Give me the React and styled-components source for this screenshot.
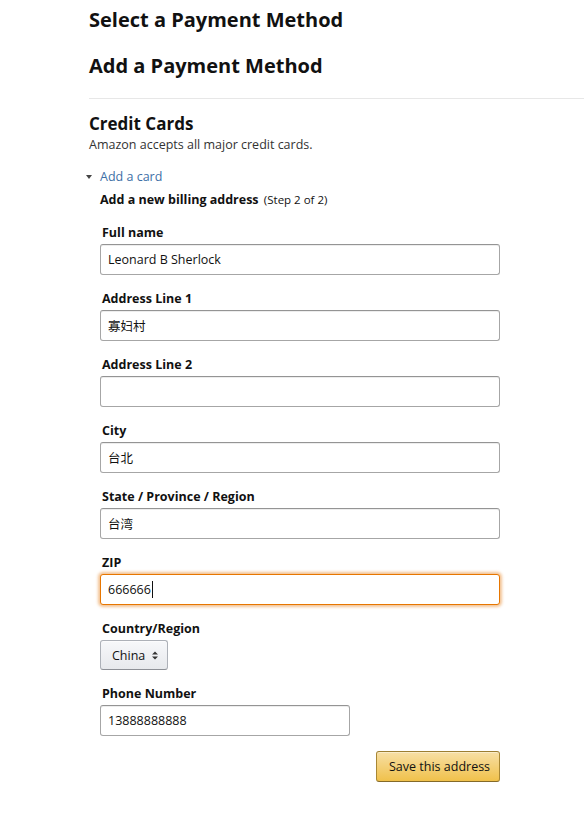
import React from "react";
import styled, { createGlobalStyle } from "styled-components";

const Global = createGlobalStyle`
  html, body { margin: 0; padding: 0; background: #fff; }
  body { font-family: "Open Sans", "Noto Sans CJK SC", sans-serif; color: #111; }
  * { box-sizing: border-box; }
`;

const Page = styled.div`
  padding: 6px 0 40px 89px;
  width: 584px;
`;

const Title = styled.h1`
  margin: 0 0 ${(p) => p.$gap || 0}px;
  font-size: 20px;
  line-height: 28px;
  font-weight: 700;
  color: #111;
`;

const Divider = styled.hr`
  margin: 0;
  border: 0;
  border-top: 1px solid #e7e7e7;
  margin-top: 18px;
`;

const SectionTitle = styled.h2`
  margin: 14px 0 0;
  font-size: 17px;
  line-height: 22px;
  font-weight: 700;
  color: #111;
`;

const Note = styled.p`
  margin: 0;
  font-size: 12.5px;
  line-height: 19px;
  color: #333;
`;

const Expander = styled.div`
  display: flex;
  align-items: center;
  gap: 8px;
  margin: 13px 0 0 -3px;
  font-size: 12.5px;
  line-height: 19px;
`;

const Caret = styled.span`
  width: 0;
  height: 0;
  border-left: 3px solid transparent;
  border-right: 3px solid transparent;
  border-top: 4px solid #444;
`;

const Link = styled.a`
  color: #3d6fa6;
  text-decoration: none;
`;

const FormArea = styled.div`
  padding-left: 11px;
`;

const SubHead = styled.div`
  margin-top: 4px;
  font-size: 12.5px;
  line-height: 19px;
  font-weight: 700;
  color: #111;

  span {
    font-weight: 400;
    font-size: 11.5px;
    margin-left: 2px;
  }
`;

const Fields = styled.div`
  display: flex;
  flex-direction: column;
  gap: 14px;
  margin-top: 14px;
`;

const Field = styled.div`
  display: flex;
  flex-direction: column;
  gap: 2px;
`;

const Label = styled.label`
  padding-left: 2px;
  font-size: 12.5px;
  line-height: 19px;
  font-weight: 700;
  color: #111;
`;

const TextBox = styled.div`
  width: ${(p) => p.$w || 400}px;
  height: 31px;
  padding: 0 7px;
  display: flex;
  align-items: center;
  font-size: 12.5px;
  color: #111;
  background: #fff;
  border: 1px solid ${(p) => (p.$focus ? "#e77600" : "#a6a6a6")};
  border-top-color: ${(p) => (p.$focus ? "#e77600" : "#949494")};
  border-radius: 3px;
  box-shadow: ${(p) =>
    p.$focus
      ? "0 0 3px 2px rgba(228,121,17,0.45)"
      : "0 1px 0 rgba(255,255,255,.5), 0 1px 0 rgba(0,0,0,.07) inset"};
`;

const TypingCaret = styled.span`
  display: inline-block;
  width: 1px;
  height: 17px;
  background: #111;
  margin-left: 1px;
`;

const SelectButton = styled.div`
  width: 68px;
  height: 30px;
  display: flex;
  align-items: center;
  justify-content: space-between;
  padding: 0 9px 0 11px;
  font-size: 12.5px;
  color: #111;
  border: 1px solid #adb1b8;
  border-bottom-color: #8d9096;
  border-radius: 3px;
  background: linear-gradient(to bottom, #f7f8fa, #e7e9ec);
  box-shadow: 0 1px 0 rgba(255, 255, 255, 0.6) inset;
`;

const Arrows = styled.svg`
  width: 6px;
  height: 9px;
`;

const Actions = styled.div`
  display: flex;
  justify-content: flex-end;
  width: 400px;
  margin-top: 15px;
`;

const GoldButton = styled.button`
  width: 124px;
  height: 31px;
  font-family: inherit;
  font-size: 12.5px;
  color: #111;
  border: 1px solid #a88734;
  border-top-color: #9c7e31;
  border-bottom-color: #846a29;
  border-radius: 3px;
  background: linear-gradient(to bottom, #f7dfa5, #f0c14b);
  box-shadow: 0 1px 0 rgba(255, 255, 255, 0.4) inset;
  text-align: left;
  padding: 0 0 0 12px;
  white-space: nowrap;
  overflow: hidden;
`;

const fields = [
  { label: "Full name", value: "Leonard B Sherlock" },
  { label: "Address Line 1", value: "寡妇村" },
  { label: "Address Line 2", value: "" },
  { label: "City", value: "台北" },
  { label: "State / Province / Region", value: "台湾" },
  { label: "ZIP", value: "666666", focus: true },
];

export default function App() {
  return (
    <>
      <Global />
      <Page>
        <Title $gap={18}>Select a Payment Method</Title>
        <Title>Add a Payment Method</Title>
        <Divider />
        <SectionTitle>Credit Cards</SectionTitle>
        <Note>Amazon accepts all major credit cards.</Note>
        <Expander>
          <Caret />
          <Link href="#">Add a card</Link>
        </Expander>
        <FormArea>
          <SubHead>
            Add a new billing address <span>(Step 2 of 2)</span>
          </SubHead>
          <Fields>
            {fields.map((f) => (
              <Field key={f.label}>
                <Label>{f.label}</Label>
                <TextBox $focus={f.focus}>
                  {f.value}
                  {f.focus && <TypingCaret />}
                </TextBox>
              </Field>
            ))}
            <Field>
              <Label>Country/Region</Label>
              <SelectButton>
                China
                <Arrows viewBox="0 0 6 9">
                  <path d="M0 3.5 L3 0.5 L6 3.5 Z M0 5.5 L3 8.5 L6 5.5 Z" fill="#333" />
                </Arrows>
              </SelectButton>
            </Field>
            <Field>
              <Label>Phone Number</Label>
              <TextBox $w={250}>13888888888</TextBox>
            </Field>
          </Fields>
          <Actions>
            <GoldButton>Save this address</GoldButton>
          </Actions>
        </FormArea>
      </Page>
    </>
  );
}
